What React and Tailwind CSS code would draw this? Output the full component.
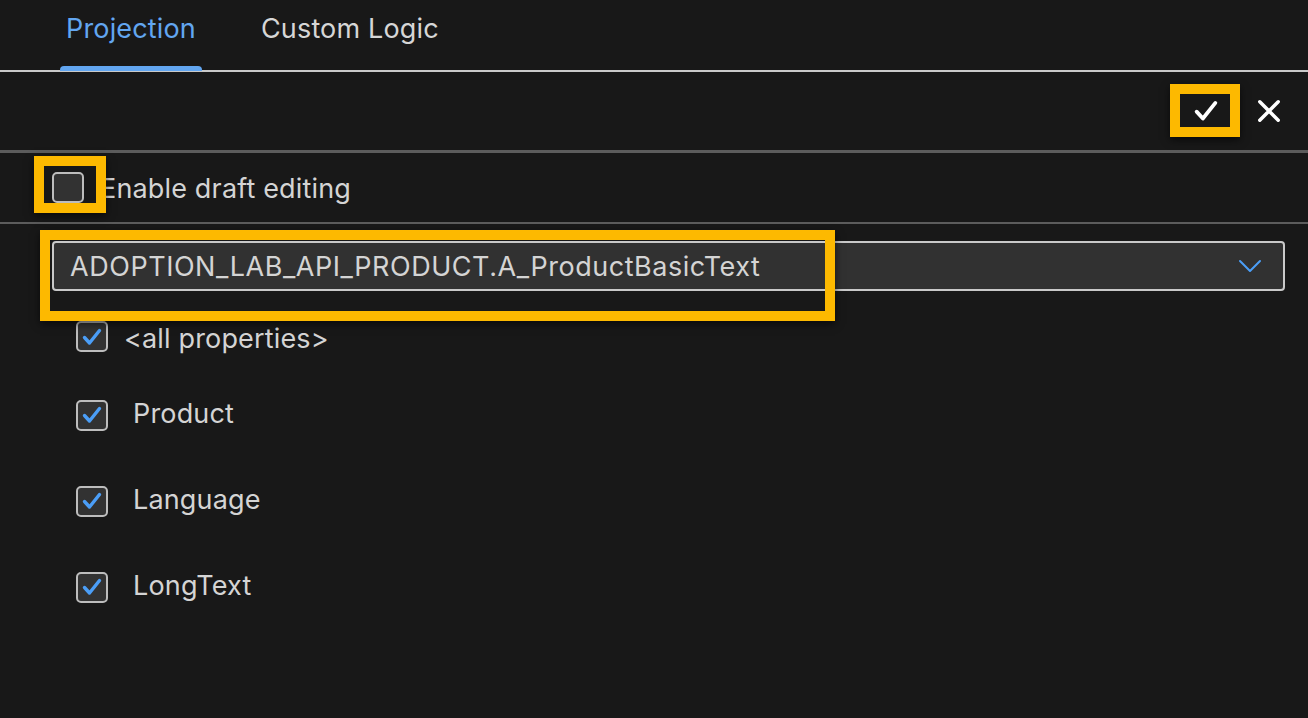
import React from 'react';

const Check = ({ className = '', width = 3 }) => (
    <svg viewBox="0 0 24 24" className={className} fill="none" stroke="currentColor" strokeWidth={width} strokeLinecap="round" strokeLinejoin="round">
        <path d="M4.5 12.5l5 5.5L19.5 5.5" />
    </svg>
);

const Box = ({ checked }) => (
    <div className="w-[32px] h-[31px] rounded-[5px] border-2 border-[#bdbdbd] bg-[#323232] flex items-center justify-center shrink-0">
        {checked && <Check className="w-[24px] h-[24px] text-[#4b9ef7]" width={3.4} />}
    </div>
);

const Highlight = ({ className }) => (
    <div className={`absolute border-[10px] border-[#fdb900] shadow-[0_3px_8px_rgba(0,0,0,0.6)] pointer-events-none ${className}`} />
);

const App = () => {
    const fields = ['Product', 'Language', 'LongText'];

    return (
        <div className="relative w-[1308px] h-[718px] overflow-hidden bg-[#181818] text-[#d4d4d4] tracking-[0.01em] font-['Inter','Liberation_Sans',sans-serif]">

            {/* Tabs */}
            <div className="flex h-[72px] border-b-2 border-[#c9c9c9] pl-[60px] gap-[53px]">
                <div className="relative px-[6px] pt-[9px] text-[27px] text-[#62a6f0]">
                    Projection
                    <div className="absolute left-0 right-0 bottom-[-1px] h-[5px] rounded-t-[4px] bg-[#62a6f0]" />
                </div>
                <div className="px-[6px] pt-[9px] text-[27px] text-[#d6d6d6]">Custom Logic</div>
            </div>

            {/* Toolbar */}
            <div className="relative flex items-center justify-end h-[81px] border-b-[3px] border-[#5c5c5c] pr-[26px] gap-[26px]">
                <Check className="w-[30px] h-[30px] text-white mr-[9px]" />
                <svg viewBox="0 0 24 24" className="w-[26px] h-[26px] text-white" fill="none" stroke="currentColor" strokeWidth="3.2" strokeLinecap="round">
                    <path d="M3.5 3.5l17 17M20.5 3.5l-17 17" />
                </svg>
                <Highlight className="left-[1170px] top-[12px] w-[70px] h-[53px]" />
            </div>

            {/* Draft editing */}
            <div className="relative flex items-center h-[71px] border-b-2 border-[#5c5c5c] pl-[52px] gap-[16px]">
                <Box />
                <span className="text-[27px] pt-[4px]">Enable draft editing</span>
                <Highlight className="left-[34px] top-[3px] w-[72px] h-[57px]" />
            </div>

            {/* Entity select */}
            <div className="relative pl-[52px] pr-[23px] pt-[17px]">
                <div className="flex items-center justify-between h-[50px] rounded-[4px] border-2 border-[#c9c9c9] bg-[#313131] pl-[16px] pr-[20px]">
                    <span className="text-[27px] tracking-[0.02em] pt-[3px]">ADOPTION_LAB_API_PRODUCT.A_ProductBasicText</span>
                    <svg viewBox="0 0 24 14" className="w-[26px] h-[14px] text-[#4b9ef7]" fill="none" stroke="currentColor" strokeWidth="2" strokeLinecap="round" strokeLinejoin="round">
                        <path d="M2 2l10 10L22 2" />
                    </svg>
                </div>
                <Highlight className="left-[40px] top-[6px] w-[795px] h-[91px]" />
            </div>

            {/* Properties */}
            <div className="pl-[76px] pt-[30px] flex flex-col">
                <div className="flex items-center gap-[16px] h-[31px]">
                    <Box checked />
                    <span className="text-[27px] pt-[5px]">&lt;all properties&gt;</span>
                </div>
                <div className="flex flex-col gap-[54px] mt-[47px]">
                    {fields.map((f) => (
                        <div key={f} className="flex items-center gap-[25px] h-[32px]">
                            <Box checked />
                            <span className="text-[27px] pb-[2px]">{f}</span>
                        </div>
                    ))}
                </div>
            </div>
        </div>
    );
};

export default App;
